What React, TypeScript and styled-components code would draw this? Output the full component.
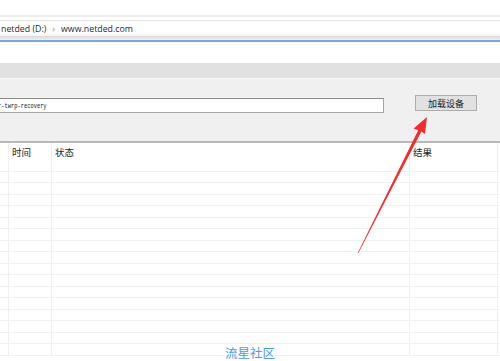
import React from "react";
import styled, { createGlobalStyle } from "styled-components";

const GlobalStyle = createGlobalStyle`
  html, body {
    margin: 0;
    padding: 0;
    background: #ffffff;
    overflow: hidden;
  }
  body {
    font-family: "Noto Sans CJK SC", "Noto Sans", sans-serif;
  }
`;

const Screen = styled.div`
  position: relative;
  width: 500px;
  height: 361px;
  overflow: hidden;
  background: #ffffff;
`;

const TopGap = styled.div`
  height: 15px;
  border-bottom: 2px solid #ededed;
`;

const AddressBar = styled.div`
  margin-top: 3px;
  height: 15px;
  border-top: 1px solid #e2e2e2;
  display: flex;
  align-items: center;
  gap: 6px;
  padding: 0 0 0 1px;
  font-family: "Open Sans", "Liberation Sans", sans-serif;
  font-size: 8.8px;
  color: #2b2b2b;
  background: linear-gradient(#ffffff 70%, #f4f4f4);
`;

const Crumb = styled.span`
  white-space: nowrap;
`;

const Chevron = styled.span`
  color: #8a8a8a;
  font-size: 9px;
`;

const BarShadow = styled.div`
  height: 4px;
  background: linear-gradient(#dadada, #efefef);
`;

const BlueLine = styled.div`
  height: 2px;
  background: #7eaad4;
`;

const WhiteGap = styled.div`
  height: 21px;
`;

const Band = styled.div`
  height: 15px;
  background: #e1e1e1;
  border-bottom: 1px solid #f7f7f7;
`;

const Panel = styled.div`
  height: 62px;
  background: #f0f0f0;
  border-bottom: 2px solid #b9b9b9;
  display: flex;
  align-items: flex-start;
`;

const PathInput = styled.div`
  margin-top: 19px;
  margin-left: -2px;
  width: 384px;
  height: 13px;
  background: #ffffff;
  border: 1px solid #a5a5a5;
  border-top-color: #8c8c8c;
  box-sizing: content-box;
  display: flex;
  align-items: center;
  overflow: hidden;
  font-family: "Liberation Mono", "DejaVu Sans Mono", monospace;
  font-size: 9px;
  color: #111111;
  white-space: nowrap;
`;

const InputText = styled.span`
  display: inline-block;
  flex: none;
  margin-left: -1px;
  transform: scale(0.6, 0.85);
  transform-origin: 0 50%;
`;

const LoadButton = styled.div`
  margin-top: 16px;
  margin-left: 31px;
  width: 60px;
  height: 14px;
  background: #e1e1e1;
  border: 1px solid #adadad;
  display: flex;
  align-items: center;
  justify-content: center;
  font-size: 9px;
  color: #1a1a1a;
`;

const Table = styled.div`
  display: flex;
  flex-direction: column;
`;

const Row = styled.div<{ $header?: boolean }>`
  display: grid;
  grid-template-columns: 9px 43px 358px 88px 2px;
  height: ${(p) => (p.$header ? "17px" : "11.5px")};
  box-sizing: border-box;
  border-bottom: ${(p) => (p.$header ? "none" : "1px solid #f1f1f1")};
  font-size: 9.5px;
  color: #1e1e1e;
`;

const Cell = styled.div`
  border-right: 1px solid #efefef;
  display: flex;
  align-items: center;
  padding-left: 3px;
  white-space: nowrap;
  overflow: hidden;
`;

const Arrow = styled.svg`
  position: absolute;
  left: 0;
  top: 0;
  pointer-events: none;
`;

const Watermark = styled.div`
  position: absolute;
  left: 225px;
  top: 346px;
  font-size: 12.5px;
  line-height: 14px;
  color: #4b9be6;
  white-space: nowrap;
`;

const rows = Array.from({ length: 17 }, (_, i) => i);

export default function App() {
  return (
    <Screen>
      <GlobalStyle />
      <TopGap />
      <AddressBar>
        <Crumb>netded (D:)</Crumb>
        <Chevron>›</Chevron>
        <Crumb>www.netded.com</Crumb>
      </AddressBar>
      <BarShadow />
      <BlueLine />
      <WhiteGap />
      <Band />
      <Panel>
        <PathInput>
          <InputText>r-twrp-recovery</InputText>
        </PathInput>
        <LoadButton>加载设备</LoadButton>
      </Panel>
      <Table>
        <Row $header>
          <Cell />
          <Cell>时间</Cell>
          <Cell>状态</Cell>
          <Cell>结果</Cell>
          <Cell />
        </Row>
        {rows.map((r) => (
          <Row key={r}>
            <Cell />
            <Cell />
            <Cell />
            <Cell />
            <Cell />
          </Row>
        ))}
      </Table>
      <Arrow width="500" height="361" viewBox="0 0 500 361">
        <polygon
          points="427,117 425,134 421.4,131.6 358.4,253 357.8,252.7 418.2,130.2 413.6,128.4"
          fill="#f22d2d"
        />
      </Arrow>
      <Watermark>流星社区</Watermark>
    </Screen>
  );
}
